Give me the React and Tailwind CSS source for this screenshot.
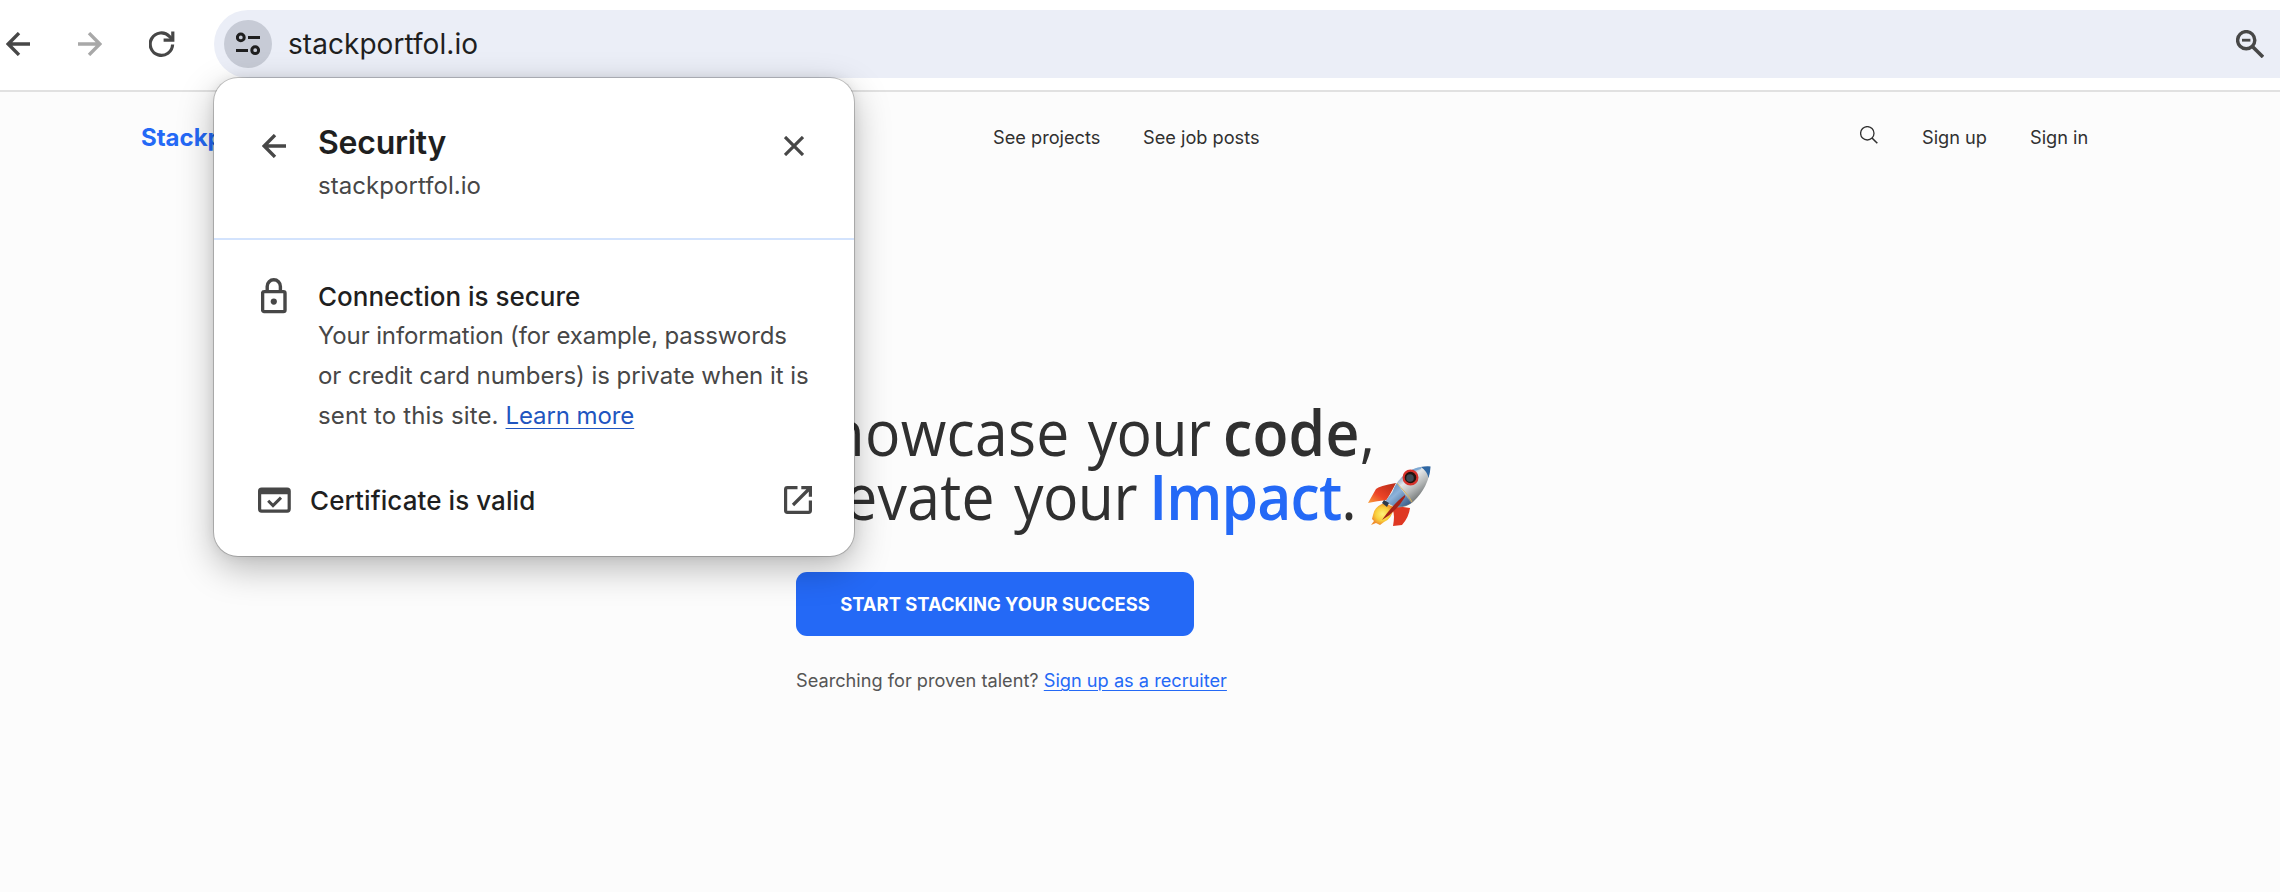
function ArrowLeft({ className }) {
  return (
    <svg viewBox="0 0 24 24" className={className} fill="none" stroke="currentColor" strokeWidth="3.4">
      <path d="M24 12H2.4M13 1.1L2.2 12L13 22.9" />
    </svg>
  );
}

function Toolbar() {
  return (
    <div className="flex h-[92px] items-start border-b-2 border-[#e1e1e1] bg-white pt-2.5">
      <div className="flex h-[68px] w-[214px] shrink-0 items-center pl-1.5 text-[#474747]">
        <ArrowLeft className="size-6" />
        <ArrowLeft className="ml-12 size-6 rotate-180 text-[#a8a8a8]" />
        <svg viewBox="0 0 26 26" className="ml-[47px] size-[26px]" fill="none" stroke="currentColor" strokeWidth="3.2">
          <path d="M23.6 13.5a11.2 11.2 0 1 1-3.2-8.2L23 8" />
          <path d="M23.8 0.5V9.2H14.6" strokeWidth="3.2" />
        </svg>
      </div>
      <div className="flex h-[68px] flex-1 items-center rounded-l-full bg-[#ebeef7] pl-2.5 pr-4">
        <div className="flex size-12 items-center justify-center rounded-full bg-[#c7cbd6]">
          <svg viewBox="0 0 24 24" className="size-6" fill="none" stroke="#1f1f1f" strokeWidth="3">
            <circle cx="4.8" cy="5.4" r="3.4" />
            <path d="M12 5.5H24M0 18.4H12" />
            <circle cx="19.2" cy="18.2" r="3.4" />
          </svg>
        </div>
        <span className="ml-4 text-[28px] leading-none tracking-[0.05px] text-[#1f1f1f]">stackportfol.io</span>
        <svg viewBox="0 0 28 28" className="ml-auto size-7" fill="none" stroke="#474747" strokeWidth="3.4">
          <circle cx="10.2" cy="10.2" r="8.6" />
          <path d="M16.4 16.4L27 27" strokeWidth="3.6" />
          <path d="M6 10.2H14.4" strokeWidth="2.8" />
        </svg>
      </div>
    </div>
  );
}

function SiteNav() {
  return (
    <nav className="flex h-[90px] items-center pl-[141px] text-[18.2px] leading-none text-[#303030]">
      <span className="w-[852px] pt-px text-[24px] font-bold text-[#2469f6]">Stackportfol.io</span>
      <span className="w-[150px]">See projects</span>
      <span className="w-[717px]">See job posts</span>
      <svg viewBox="0 0 18 18" className="mb-1 size-[18px]" fill="none" stroke="currentColor" strokeWidth="1.3">
        <circle cx="7.3" cy="7.3" r="6.7" />
        <path d="M12 12L17.3 17.3" strokeWidth="1.6" />
      </svg>
      <span className="ml-11 w-[108px]">Sign up</span>
      <span>Sign in</span>
    </nav>
  );
}

function Rocket() {
  return (
    <svg viewBox="0 0 66 66" className="mt-[3px] size-[66px] shrink-0">
      <defs>
        <linearGradient id="body" x1="0.25" y1="0.2" x2="0.75" y2="0.8">
          <stop offset="0" stopColor="#5b83b4" />
          <stop offset="0.35" stopColor="#e3e6e8" />
          <stop offset="0.65" stopColor="#b5b8b8" />
          <stop offset="1" stopColor="#6d7172" />
        </linearGradient>
        <linearGradient id="blue" x1="0" y1="0" x2="1" y2="1">
          <stop offset="0" stopColor="#4a78ab" />
          <stop offset="0.45" stopColor="#8db3da" />
          <stop offset="1" stopColor="#2c4f7c" />
        </linearGradient>
        <linearGradient id="fin" x1="1" y1="0" x2="0" y2="1">
          <stop offset="0" stopColor="#b32a18" />
          <stop offset="0.6" stopColor="#ec4327" />
          <stop offset="1" stopColor="#fba03a" />
        </linearGradient>
        <radialGradient id="flame">
          <stop offset="0" stopColor="#fff27a" />
          <stop offset="0.6" stopColor="#f9cf3c" />
          <stop offset="1" stopColor="#ef8d2c" />
        </radialGradient>
      </defs>
      <path d="M1 38L9 24Q12 21 29 18L20 35Q10 36 1 38Z" fill="url(#fin)" />
      <path d="M38 32L36 42L43 43Q42 52 35 60L26 61Q28 50 26 46Z" fill="#df3823" />
      <path d="M17 38Q7 42 6 50L5 54L7 56L4 60L9 58L13 60L17 57Q25 54 27 42Z" fill="url(#flame)" />
      <path d="M63.5 1.5Q51 0 40 8Q30 15 26 25L18 37L27 42Q38 44 46 37Q62 22 63.5 1.5Z" fill="url(#body)" />
      <path d="M30 18Q27 22 25.500 27L18 37L27 41Q37 42.500 44 38Z" fill="url(#blue)" />
      <path d="M63.500 1.500Q60 0.900 54 2Q60 6 61.500 13Q63.400 7 63.500 1.500Z" fill="#2f67a3" />
      <path d="M54 2Q46 3 40 8L33 14Q42 7 54 4Z" fill="#7fa9d3" />
      <path d="M30 18Q34 23 38 27T45 37" fill="none" stroke="#d9b65c" strokeWidth="0.9" />
      <circle cx="43.500" cy="12.500" r="6.900" fill="#26140f" stroke="#d6322b" strokeWidth="2.200" />
      <circle cx="43" cy="13" r="3.800" fill="#3d4a54" />
      <path d="M17 35L22 38L20 42L15 38Z" fill="#2d3a48" />
      <path d="M38 30Q27 38 15 55Q29 47 38 32Z" fill="#a52318" />
    </svg>
  );
}

function Hero() {
  return (
    <main className="pl-[796px] pt-[218px]">
      <h1 className="whitespace-nowrap font-['Open_Sans','Noto_Sans',sans-serif] text-[64px] font-[440] leading-[64px] text-[#303030]">
        <div className="flex h-16 w-[660px] origin-left scale-x-[0.92]">
          <span className="w-[317px] shrink-0 tracking-[0.3px]">Showcase</span>
          <span className="w-[147px] shrink-0 tracking-[-0.6px]">your</span>
          <span className="font-[540] tracking-[0.3px]">code</span>
          <span className="font-[500]">,</span>
        </div>
        <div className="flex h-16 items-center">
          <div className="w-[571px]">
            <div className="flex w-[660px] origin-left scale-x-[0.92]">
              <span className="w-[237px] shrink-0 tracking-[0.3px]">Elevate</span>
              <span className="w-[147px] shrink-0 tracking-[-0.6px]">your</span>
              <span className="font-[540] tracking-[-1px] text-[#2469f6]">Impact</span>
              <span className="font-[500]">.</span>
            </div>
          </div>
          <Rocket />
        </div>
      </h1>
      <button className="mt-[44px] flex h-16 w-[398px] items-center justify-center rounded-[11px] bg-[#2469f6] text-[18.4px] font-[650] leading-none text-white">
        START STACKING YOUR SUCCESS
      </button>
      <p className="mt-[30px] text-[18.2px] leading-7 text-[#555]">
        Searching for proven talent?{' '}
        <a className="text-[#2469f6] underline decoration-1 underline-offset-[3px]">Sign up as a recruiter</a>
      </p>
    </main>
  );
}

function SecurityPopup() {
  return (
    <section className="absolute left-[214px] top-[78px] h-[478px] w-[640px] rounded-[24px] bg-white text-[#474747] shadow-[0_0_0_1px_rgba(0,0,0,0.2),0_12px_36px_rgba(0,0,0,0.28),0_0_12px_rgba(0,0,0,0.08)]">
      <header className="flex h-[162px] items-start border-b-2 border-[#d3e3fd] pl-12 pr-[50px] pt-11">
        <ArrowLeft className="mt-3 size-6" />
        <div className="ml-8 flex-1 pt-px">
          <h2 className="text-[32px] font-[560] leading-10 tracking-[-0.25px] text-[#1f1f1f]">Security</h2>
          <p className="mt-[3px] text-[24px] leading-10 tracking-[0.05px]">stackportfol.io</p>
        </div>
        <svg viewBox="0 0 20 20" className="mt-3.5 size-5" fill="none" stroke="currentColor" strokeWidth="3.2">
          <path d="M1 1L19 19M19 1L1 19" />
        </svg>
      </header>
      <div className="flex items-start pl-[47px] pt-[38px]">
        <svg viewBox="0 0 26 36" className="h-9 w-[26px]" fill="none" stroke="currentColor" strokeWidth="3.4">
          <rect x="1.6" y="13.6" width="22.4" height="20" rx="1.6" />
          <path d="M6.200 13V8.400a6.600 6.600 0 0 1 13.200 0V13" />
          <circle cx="12.800" cy="23.600" r="3.100" fill="currentColor" stroke="none" />
        </svg>
        <div className="ml-[31px]">
          <h3 className="text-[26px] font-[550] leading-[38px] text-[#1f1f1f]">Connection is secure</h3>
          <p className="flex flex-col text-[24px] leading-10">
            <span className="tracking-[-0.13px]">Your information (for example, passwords</span>
            <span className="tracking-[-0.04px]">or credit card numbers) is private when it is</span>
            <span className="tracking-[0.12px]">
              sent to this site.{' '}
              <a className="tracking-[-0.1px] text-[#1f55c0] underline decoration-1 underline-offset-[4px]">Learn more</a>
            </span>
          </p>
        </div>
      </div>
      <div className="mt-[44px] flex h-10 items-center pl-11 pr-[41px]">
        <svg viewBox="0 0 33 26" className="h-[26px] w-[33px]" fill="none" stroke="currentColor" strokeWidth="3.200">
          <rect x="1.600" y="2.100" width="29.600" height="22" rx="2" />
          <path d="M1.600 5H31.200" strokeWidth="4.500" />
          <path d="M10.200 13.800L15 18.600L23 10.600" strokeWidth="3" />
        </svg>
        <span className="ml-[19px] flex-1 pt-0.5 text-[26px] font-[550] leading-10 tracking-[0.08px] text-[#1f1f1f]">Certificate is valid</span>
        <svg viewBox="0 0 30 30" className="size-[30px]" fill="none" stroke="currentColor" strokeWidth="3.200">
          <path d="M14.500 2.600H4.400Q2.600 2.600 2.600 4.400V25.600Q2.600 27.400 4.400 27.400H25.600Q27.400 27.400 27.400 25.600V15.500" />
          <path d="M18.300 2.600H27.400V11.700M27 3L10 20" />
        </svg>
      </div>
    </section>
  );
}

export default function App() {
  return (
    <div className="relative h-[892px] w-[2280px] overflow-hidden bg-[#fcfcfc] font-['Inter','Liberation_Sans',sans-serif]">
      <Toolbar />
      <SiteNav />
      <Hero />
      <SecurityPopup />
    </div>
  );
}
